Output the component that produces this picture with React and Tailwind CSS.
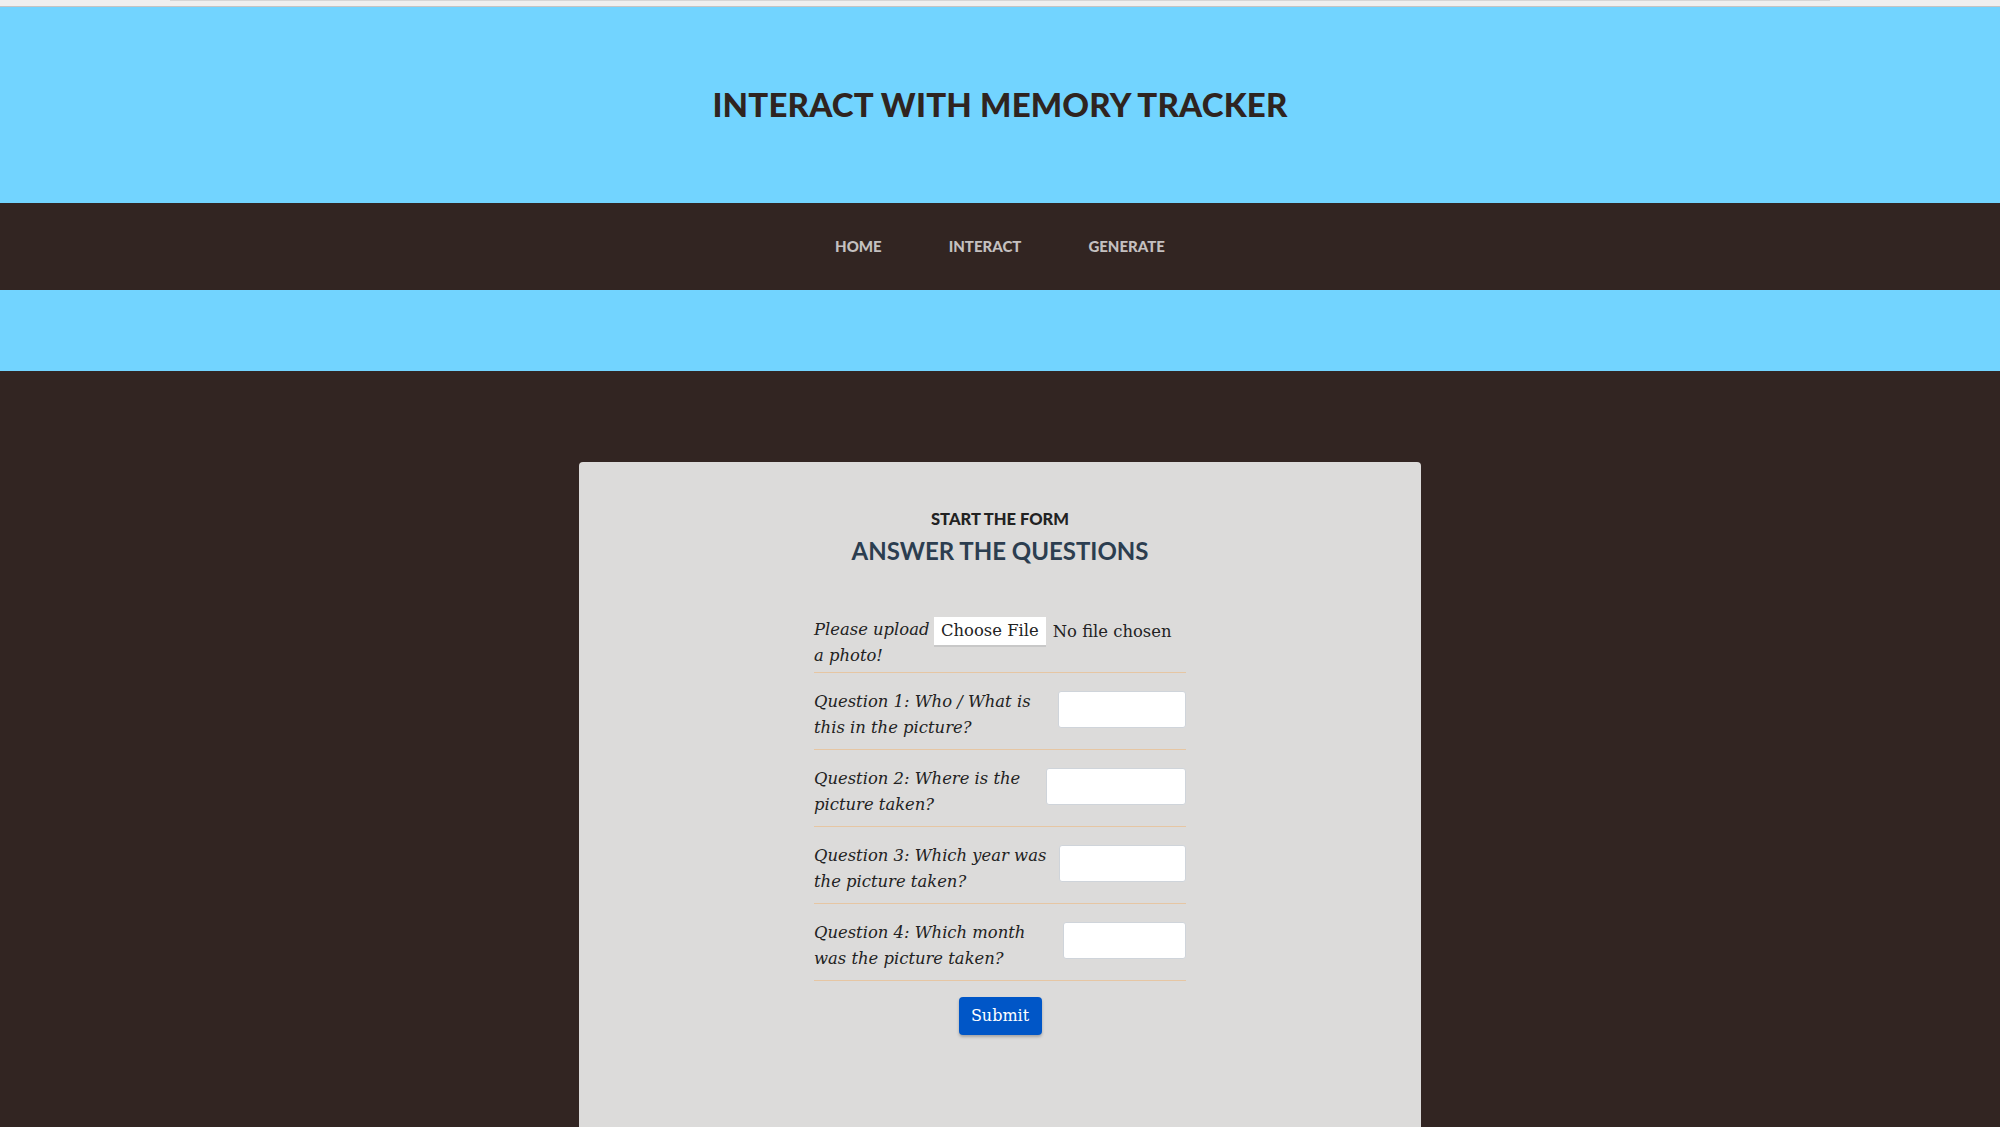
export default function App() {
  const questions = [
    { lines: ["Question 1: Who / What is", "this in the picture?"], w: "w-[128px]" },
    { lines: ["Question 2: Where is the", "picture taken?"], w: "w-[140px]" },
    { lines: ["Question 3: Which year was", "the picture taken?"], w: "w-[127px]" },
    { lines: ["Question 4: Which month", "was the picture taken?"], w: "w-[123px]" },
  ];

  const serif = "font-['DejaVu_Serif',serif]";

  return (
    <div className="min-h-screen bg-[#322522] flex flex-col">
      {/* browser strip */}
      <div className="h-[7px] bg-[#efefef] border-b border-[#c4c4c4] flex justify-center">
        <div className="w-[1660px] h-[1px] bg-[#d6d6d6]" />
      </div>

      <header className="h-[196px] bg-[#72d4ff] flex items-center justify-center">
        <h1 className="font-['Lato',sans-serif] font-black text-[33px] tracking-[0.2px] text-[#2f2420]">
          INTERACT WITH MEMORY TRACKER
        </h1>
      </header>

      <nav className="h-[87px] bg-[#322522] flex items-center justify-center gap-[67px] font-['Lato',sans-serif] font-black text-[15px] text-[#c4c0c0]">
        <a href="#">HOME</a>
        <a href="#">INTERACT</a>
        <a href="#">GENERATE</a>
      </nav>

      <div className="h-[81px] bg-[#72d4ff]" />

      <main className="flex-1 flex justify-center pt-[91px]">
        <div className="w-[842px] min-h-[665px] bg-[#dcdbda] rounded-t-[4px] flex flex-col items-center pt-[47px]">
          <h3 className="font-['Lato',sans-serif] font-black text-[16.5px] leading-[20px] text-[#222222]">
            START THE FORM
          </h3>
          <h2 className="mt-[8px] font-['Lato',sans-serif] font-bold text-[24px] leading-[28px] text-[#2c3e50]">
            ANSWER THE QUESTIONS
          </h2>

          <form className={`mt-[52px] w-[372px] ${serif} text-[16.4px] text-[#222222]`}>
            <div className="flex items-start pb-[3px] border-b border-[#e6c6a3]">
              <span className="italic leading-[26px] w-[120px]">
                Please upload<br />a photo!
              </span>
              <span className="h-[30px] px-[7px] bg-white border-b-2 border-[#c8c8c8] flex items-center leading-none">
                Choose File
              </span>
              <span className="ml-[7px] leading-[30px]">No file chosen</span>
            </div>

            {questions.map((q) => (
              <div
                key={q.lines[0]}
                className="flex items-start justify-between pt-[16px] pb-[8px] border-b border-[#e6c6a3]"
              >
                <label className="italic leading-[26px] whitespace-nowrap">
                  {q.lines[0]}
                  <br />
                  {q.lines[1]}
                </label>
                <input
                  type="text"
                  className={`${q.w} h-[37px] mt-[2px] bg-white border border-[#cfd4da] rounded-[3px] outline-none`}
                />
              </div>
            ))}

            <div className="flex justify-center mt-[16px]">
              <button
                type="button"
                className="w-[83px] h-[38px] bg-[#0056c7] text-white rounded-[4px] shadow-[0_2px_3px_rgba(0,0,0,0.25)] text-[16px]"
              >
                Submit
              </button>
            </div>
          </form>
        </div>
      </main>
    </div>
  );
}
